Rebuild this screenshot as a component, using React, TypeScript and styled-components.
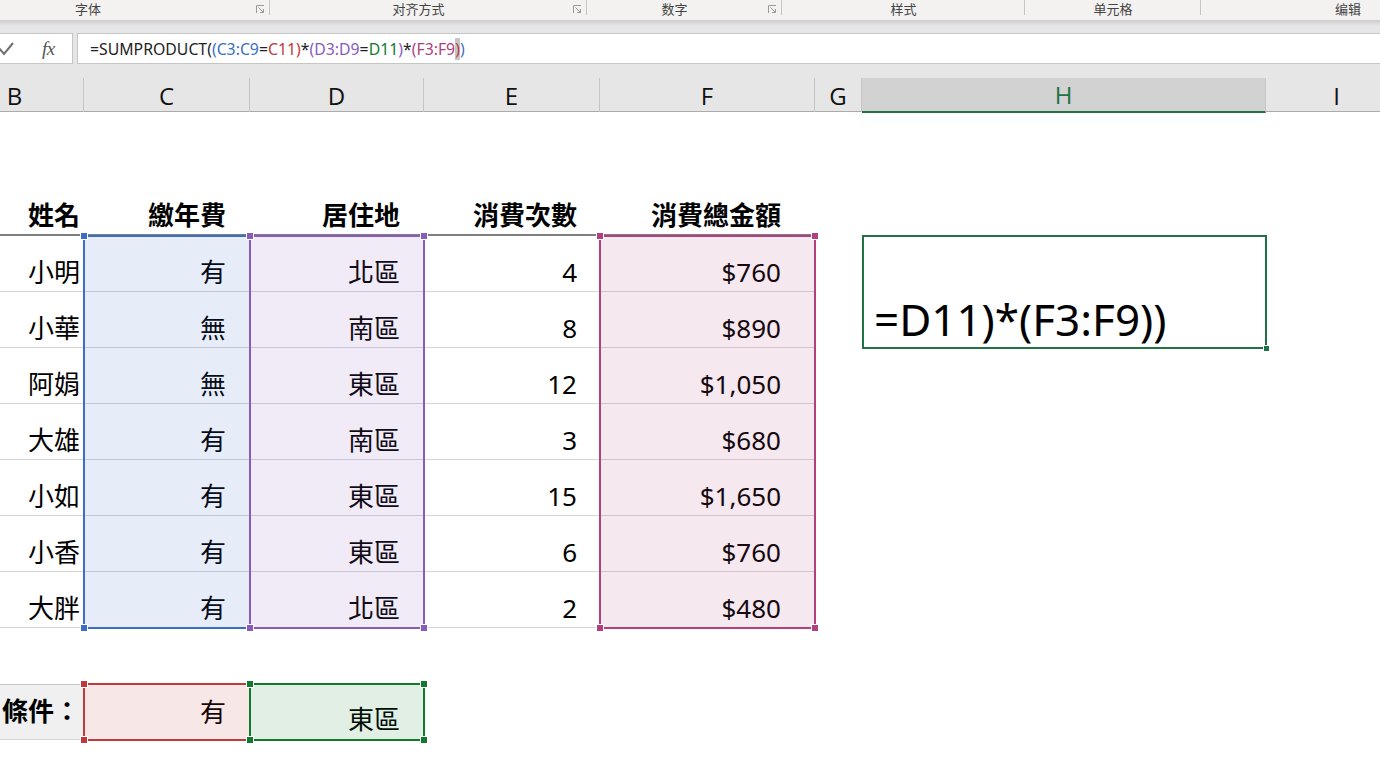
import React from 'react';
import styled, { createGlobalStyle } from 'styled-components';

const GlobalStyle = createGlobalStyle`
  html, body {
    margin: 0;
    padding: 0;
    background: #fff;
    overflow: hidden;
  }
  body {
    font-family: "Noto Sans", "Noto Sans CJK TC", sans-serif;
  }
`;

const COLS = '138px 166px 174px 176px 215px 47px 404px 142px';

const Page = styled.div`
  width: 1380px;
  height: 771px;
  display: flex;
  flex-direction: column;
  overflow: hidden;
  background: #fff;
`;

/* ---------- ribbon ---------- */

const Ribbon = styled.div`
  height: 20px;
  flex-shrink: 0;
  background: #f3f2f1;
  display: flex;
  overflow: hidden;
`;

const Group = styled.div<{ $w: number; $shift?: number; $last?: boolean }>`
  flex: 0 0 ${(p) => p.$w}px;
  margin-left: ${(p) => p.$shift ?? 0}px;
  height: 20px;
  display: flex;
  position: relative;

  &::after {
    content: '';
    display: ${(p) => (p.$last ? 'none' : 'block')};
    position: absolute;
    right: 0;
    top: 0;
    width: 1px;
    height: 15px;
    background: #c8c6c4;
  }
`;

const GroupLabel = styled.div`
  flex: 1;
  text-align: center;
  font-family: "Noto Sans CJK SC", sans-serif;
  font-size: 13px;
  line-height: 17px;
  color: #444;
`;

const Launcher = styled.div`
  width: 20px;
  display: flex;
  justify-content: center;
  padding-top: 5px;
  box-sizing: border-box;
`;

/* ---------- formula bar ---------- */

const FormulaArea = styled.div`
  flex-shrink: 0;
  background: linear-gradient(#cdcdcd, #e6e6e6 6px);
  padding: 13px 0 14px;
`;

const FormulaRow = styled.div`
  height: 31px;
  display: flex;
  gap: 4px;
`;

const ButtonBox = styled.div`
  width: 73px;
  box-sizing: border-box;
  background: #fff;
  border: 1px solid #c6c6c6;
  border-left: none;
  display: flex;
  align-items: center;
  gap: 28px;
`;

const Fx = styled.span`
  font-family: "Liberation Serif", serif;
  font-style: italic;
  font-size: 19px;
  color: #555;
  letter-spacing: -0.5px;
`;

const FormulaInput = styled.div`
  flex: 1;
  box-sizing: border-box;
  background: #fff;
  border: 1px solid #c6c6c6;
  border-right: none;
  padding-left: 12px;
  display: flex;
  align-items: center;
  font-family: "Noto Sans", sans-serif;
  font-size: 15.8px;
  color: #222;
  white-space: pre;
`;

const Tok = styled.span<{ $c?: string; $hl?: boolean }>`
  color: ${(p) => p.$c ?? '#222'};
  background: ${(p) => (p.$hl ? '#c6c6c6' : 'transparent')};
`;

/* ---------- column headers ---------- */

const HeaderStrip = styled.div`
  flex-shrink: 0;
  height: 34px;
  box-sizing: border-box;
  margin-left: -54px;
  display: grid;
  grid-template-columns: ${COLS};
  background: #e6e6e6;
  border-bottom: 1px solid #ababab;
`;

const ColHead = styled.div<{ $active?: boolean }>`
  display: flex;
  align-items: center;
  justify-content: center;
  box-sizing: border-box;
  border-right: 1px solid #c6c6c6;
  font-family: "Open Sans", sans-serif;
  font-size: 24px;
  color: ${(p) => (p.$active ? '#217346' : '#111')};
  background: ${(p) => (p.$active ? '#d2d2d2' : 'transparent')};
  border-bottom: ${(p) => (p.$active ? '2px solid #217346' : 'none')};
  margin-bottom: ${(p) => (p.$active ? '-1px' : '0')};
`;

/* ---------- sheet ---------- */

const Sheet = styled.div`
  flex: 1;
  margin-left: -54px;
  display: grid;
  grid-template-columns: ${COLS};
  grid-template-rows: 68px repeat(10, 56px) 1fr;
`;

type Line = 'none' | 'light' | 'dark' | 'box';

const Cell = styled.div<{
  $row: number;
  $col: number;
  $pad: number;
  $bottom?: number;
  $bold?: boolean;
  $line?: Line;
  $bg?: string;
}>`
  grid-row: ${(p) => p.$row};
  grid-column: ${(p) => p.$col};
  display: flex;
  align-items: flex-end;
  justify-content: flex-end;
  box-sizing: border-box;
  padding-right: ${(p) => p.$pad}px;
  padding-bottom: ${(p) => p.$bottom ?? 1}px;
  font-family: "Noto Sans", "Noto Sans CJK TC", sans-serif;
  font-size: 26px;
  line-height: 36px;
  font-weight: ${(p) => (p.$bold ? 700 : 400)};
  color: #000;
  background: ${(p) => p.$bg ?? 'transparent'};
  border-bottom: ${(p) =>
    p.$line === 'dark'
      ? '2px solid #7f7f7f'
      : p.$line === 'light' || p.$line === 'box'
      ? '1px solid #d4d4d4'
      : 'none'};
  border-top: ${(p) => (p.$line === 'box' ? '1px solid #c8c8c8' : 'none')};
`;

const RangeBox = styled.div<{ $row: number; $rowEnd: number; $col: number; $c: string }>`
  grid-row: ${(p) => p.$row} / ${(p) => p.$rowEnd};
  grid-column: ${(p) => p.$col};
  margin: -1px;
  border: 2px solid ${(p) => p.$c};
  background: ${(p) => p.$c}1f;
  position: relative;
  z-index: 1;
  pointer-events: none;
`;

const Handle = styled.div<{ $c: string; $x: 'l' | 'r'; $y: 't' | 'b' }>`
  position: absolute;
  width: 6px;
  height: 6px;
  background: ${(p) => p.$c};
  box-shadow: 0 0 0 1px #fff;
  ${(p) => (p.$x === 'l' ? 'left: -4px;' : 'right: -4px;')}
  ${(p) => (p.$y === 't' ? 'top: -4px;' : 'bottom: -4px;')}
`;

const ActiveCell = styled.div`
  grid-row: 3 / 5;
  grid-column: 7;
  margin: -1px -1px -1px 0;
  border: 2px solid #217346;
  position: relative;
  z-index: 2;
  display: flex;
  align-items: flex-end;
  padding: 0 0 0 10px;
  font-family: "Noto Sans", sans-serif;
  font-size: 44px;
  line-height: 56px;
  color: #000;
  white-space: pre;
`;

const FillHandle = styled.div`
  position: absolute;
  right: -4px;
  bottom: -4px;
  width: 5px;
  height: 5px;
  background: #217346;
  box-shadow: 0 0 0 1px #fff;
`;

const groups = [
  { label: '字体', w: 344, shift: -74, launcher: true },
  { label: '对齐方式', w: 317, launcher: true },
  { label: '数字', w: 195, launcher: true },
  { label: '样式', w: 243 },
  { label: '单元格', w: 176 },
  { label: '编辑', w: 294, last: true },
];

const heads = ['B', 'C', 'D', 'E', 'F', 'G', 'H', 'I'];

const pads = [4, 24, 24, 23, 34];
const titles = ['姓名', '繳年費', '居住地', '消費次數', '消費總金額'];

const rows = [
  ['小明', '有', '北區', '4', '$760'],
  ['小華', '無', '南區', '8', '$890'],
  ['阿娟', '無', '東區', '12', '$1,050'],
  ['大雄', '有', '南區', '3', '$680'],
  ['小如', '有', '東區', '15', '$1,650'],
  ['小香', '有', '東區', '6', '$760'],
  ['大胖', '有', '北區', '2', '$480'],
];

const ranges = [
  { row: 3, rowEnd: 10, col: 2, c: '#3a6fc4' },
  { row: 3, rowEnd: 10, col: 3, c: '#8a5bbf' },
  { row: 3, rowEnd: 10, col: 5, c: '#b0407f' },
  { row: 11, rowEnd: 12, col: 2, c: '#c0393b' },
  { row: 11, rowEnd: 12, col: 3, c: '#107c2b' },
];

const LauncherIcon = () => (
  <svg width="9" height="9" viewBox="0 0 9 9">
    <path d="M0.5 8 V0.5 H8" fill="none" stroke="#9a9a9a" strokeWidth="1" />
    <path d="M2.5 2.5 L7.5 7.5 M7.5 4 V7.5 H4" fill="none" stroke="#9a9a9a" strokeWidth="1" />
  </svg>
);

const CheckIcon = () => (
  <svg width="14" height="14" viewBox="0 0 14 14">
    <path d="M-1 6 L4 12 L13 1" fill="none" stroke="#6e6e6e" strokeWidth="2" />
  </svg>
);

const App: React.FC = () => {
  return (
    <Page>
      <GlobalStyle />
      <Ribbon>
        {groups.map((g) => (
          <Group key={g.label} $w={g.w} $shift={g.shift} $last={g.last}>
            <GroupLabel>{g.label}</GroupLabel>
            {g.launcher && (
              <Launcher>
                <LauncherIcon />
              </Launcher>
            )}
          </Group>
        ))}
      </Ribbon>

      <FormulaArea>
        <FormulaRow>
          <ButtonBox>
            <CheckIcon />
            <Fx>fx</Fx>
          </ButtonBox>
          <FormulaInput>
            <Tok>=SUMPRODUCT(</Tok>
            <Tok $c="#3a6fc4">(C3:C9</Tok>
            <Tok>=</Tok>
            <Tok $c="#c0393b">C11)</Tok>
            <Tok>*</Tok>
            <Tok $c="#8a5bbf">(D3:D9</Tok>
            <Tok>=</Tok>
            <Tok $c="#107c2b">D11</Tok>
            <Tok $c="#8a5bbf">)</Tok>
            <Tok>*</Tok>
            <Tok $c="#b0407f">(F3:F9</Tok>
            <Tok $c="#c0393b" $hl>)</Tok>
            <Tok $c="#3a6fc4">)</Tok>
          </FormulaInput>
        </FormulaRow>
      </FormulaArea>

      <HeaderStrip>
        {heads.map((h) => (
          <ColHead key={h} $active={h === 'H'}>
            {h}
          </ColHead>
        ))}
      </HeaderStrip>

      <Sheet>
        {titles.map((t, i) => (
          <Cell key={t} $row={2} $col={i + 1} $pad={pads[i]} $bold $line="dark">
            {t}
          </Cell>
        ))}

        {rows.map((r, ri) =>
          r.map((v, ci) => (
            <Cell key={`${ri}-${ci}`} $row={ri + 3} $col={ci + 1} $pad={pads[ci]} $line="light">
              {v}
            </Cell>
          ))
        )}

        <Cell $row={11} $col={1} $pad={4} $bottom={10} $bold $line="box" $bg="#f0f0f0">
          條件：
        </Cell>
        <Cell $row={11} $col={2} $pad={24} $bottom={10}>
          有
        </Cell>
        <Cell $row={11} $col={3} $pad={24} $bottom={3}>
          東區
        </Cell>

        {ranges.map((r) => (
          <RangeBox key={`${r.row}-${r.col}`} $row={r.row} $rowEnd={r.rowEnd} $col={r.col} $c={r.c}>
            <Handle $c={r.c} $x="l" $y="t" />
            <Handle $c={r.c} $x="r" $y="t" />
            <Handle $c={r.c} $x="l" $y="b" />
            <Handle $c={r.c} $x="r" $y="b" />
          </RangeBox>
        ))}

        <ActiveCell>
          =D11)*(F3:F9))
          <FillHandle />
        </ActiveCell>
      </Sheet>
    </Page>
  );
};

export default App;
